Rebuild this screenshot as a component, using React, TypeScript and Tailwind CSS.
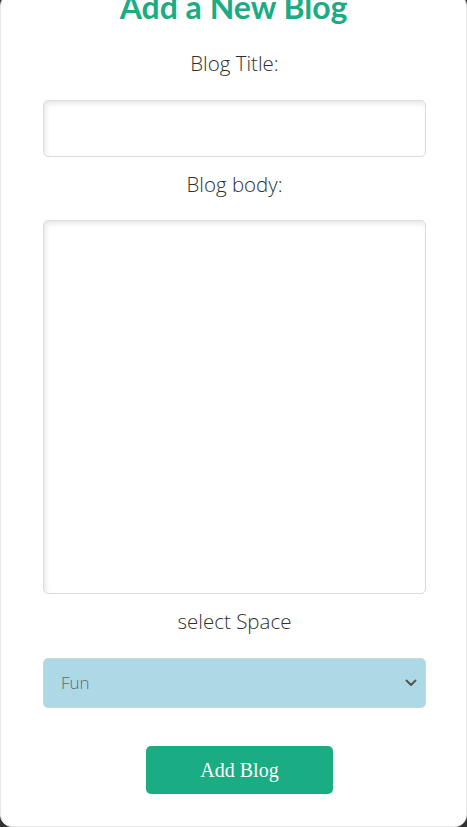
export default function App() {
  const label = "block text-center text-[20.5px] font-light leading-[27px] text-[#2f2f2f]";
  const field =
    "block w-full rounded-[5px] border border-[#dcdcdc] bg-white shadow-[inset_2px_3px_5px_rgba(0,0,0,0.09)] outline-none";

  return (
    <div className="h-[827px] overflow-hidden bg-[#333]" style={{ fontFamily: "'Open Sans', 'Noto Sans', sans-serif" }}>
      {/* Card */}
      <div className="-mt-[6px] h-[833px] rounded-[12px] border border-[#e8e8e8] bg-white">
        <h2
          className="text-center text-[32px] font-bold leading-[24px] text-[#1aac83]"
          style={{ fontFamily: "Lato, 'Noto Sans', sans-serif" }}
        >
          Add a New Blog
        </h2>

        <form className="ml-[42px] mt-[31px] w-[383px]" onSubmit={e => e.preventDefault()}>
          <label className={label}>Blog Title:</label>
          <input type="text" className={`${field} mt-[23px] h-[57px] px-3`} />

          <label className={`${label} mt-[14px]`}>Blog body:</label>
          <textarea className={`${field} mt-[22px] h-[374px] resize-none p-3`} />

          <label className={`${label} mt-[14px]`}>select Space</label>
          <div className="relative mt-[23px]">
            <select className="block h-[50px] w-full appearance-none rounded-[5px] border border-[#c9d6da] bg-[#add8e6] pl-[17px] text-[17px] font-light text-[#666] outline-none">
              <option>Fun</option>
              <option>Work</option>
            </select>
            <svg
              className="pointer-events-none absolute right-[9px] top-[21px]"
              width="12"
              height="8"
              viewBox="0 0 12 8"
              fill="none"
            >
              <path d="M1.5 1.5 6 6l4.5-4.5" stroke="#555" strokeWidth="2" strokeLinecap="round" strokeLinejoin="round" />
            </svg>
          </div>

          <div className="mt-[38px] flex">
            <button
              className="ml-[103px] h-[48px] w-[187px] rounded-[5px] bg-[#1aac83] text-[20px] text-white"
              style={{ fontFamily: "'Liberation Serif', serif" }}
            >
              Add Blog
            </button>
          </div>
        </form>
      </div>
    </div>
  );
}
